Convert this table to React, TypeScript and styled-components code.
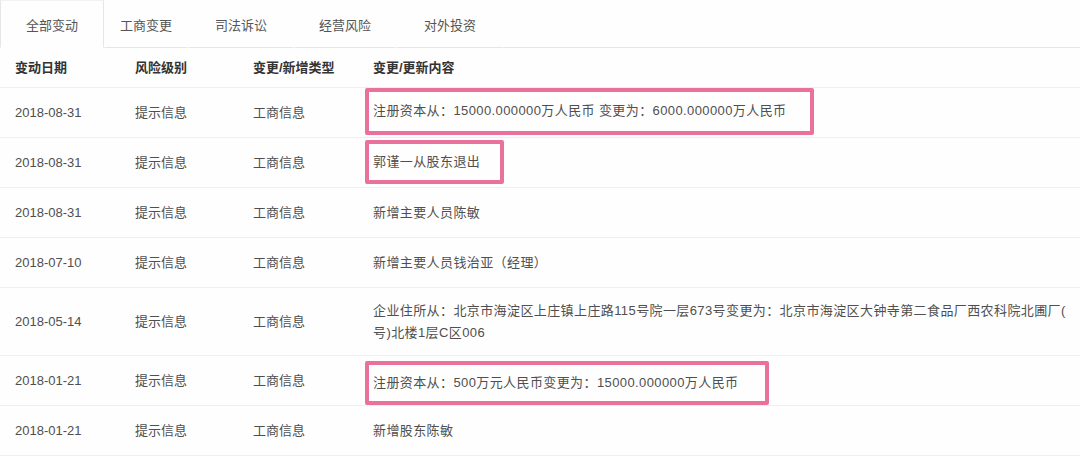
import styled, { createGlobalStyle } from "styled-components";

const GlobalStyle = createGlobalStyle`
  html, body {
    margin: 0;
    padding: 0;
    background: #fefefe;
    overflow: hidden;
  }
  body {
    font-family: "Liberation Sans", "Noto Sans CJK SC", sans-serif;
    font-size: 13px;
    color: #555;
  }
`;

const Page = styled.div`
  width: 1080px;
  height: 456px;
  display: flex;
  flex-direction: column;
`;

const TabBar = styled.div`
  display: flex;
  height: 48px;
  flex-shrink: 0;
`;

const Tab = styled.div<{ $w: number; $active?: boolean }>`
  width: ${p => p.$w}px;
  display: flex;
  align-items: center;
  justify-content: center;
  color: #555;
  box-sizing: border-box;
  border-bottom: 1px solid ${p => (p.$active ? "transparent" : "#e6e6e6")};
  border-left: 1px solid ${p => (p.$active ? "#e6e6e6" : "transparent")};
  border-right: 1px solid ${p => (p.$active ? "#e6e6e6" : "transparent")};
  border-top: 1px solid ${p => (p.$active ? "#f2f2f2" : "transparent")};
`;

const TabFill = styled.div`
  flex: 1;
  border-bottom: 1px solid #e6e6e6;
`;

const Row = styled.div<{ $h: number }>`
  display: grid;
  grid-template-columns: 120px 118px 120px 1fr;
  height: ${p => p.$h}px;
  box-sizing: border-box;
  border-bottom: 1px solid #efefef;
  flex-shrink: 0;
`;

const Cell = styled.div<{ $head?: boolean; $content?: boolean }>`
  display: flex;
  align-items: center;
  padding-left: 15px;
  line-height: 22px;
  color: ${p => (p.$head ? "#333" : "#4f4f4f")};
  font-weight: ${p => (p.$head ? 700 : 400)};
  letter-spacing: ${p => (p.$content ? "0.4px" : "0")};
  white-space: nowrap;
  overflow: hidden;
`;

const Mark = styled.div<{ $h: number; $pr: number; $dy?: number }>`
  display: flex;
  align-items: center;
  height: ${p => p.$h}px;
  box-sizing: border-box;
  border: 4px solid #e9719b;
  border-radius: 2px;
  margin-left: -8px;
  padding: 0 ${p => p.$pr}px 0 4px;
  margin-top: ${p => p.$dy ?? 0}px;
`;

const tabs = [
  { label: "全部变动", w: 104 },
  { label: "工商变更", w: 84 },
  { label: "司法诉讼", w: 106 },
  { label: "经营风险", w: 102 },
  { label: "对外投资", w: 108 },
];

type Item = {
  date: string;
  content: React.ReactNode;
  h?: number;
  mark?: { h: number; pr: number; dy?: number };
};

const rows: Item[] = [
  {
    date: "2018-08-31",
    content: "注册资本从：15000.000000万人民币 变更为：6000.000000万人民币",
    mark: { h: 47, pr: 24, dy: -3 },
  },
  { date: "2018-08-31", content: "郭谨一从股东退出", mark: { h: 44, pr: 20, dy: -2 } },
  { date: "2018-08-31", content: "新增主要人员陈敏" },
  { date: "2018-07-10", content: "新增主要人员钱治亚（经理）" },
  {
    date: "2018-05-14",
    h: 68,
    content: (
      <span>
        企业住所从：北京市海淀区上庄镇上庄路115号院一层673号变更为：北京市海淀区大钟寺第二食品厂西农科院北圃厂(
        <br />
        号)北楼1层C区006
      </span>
    ),
  },
  {
    date: "2018-01-21",
    content: "注册资本从：500万元人民币变更为：15000.000000万人民币",
    mark: { h: 44, pr: 27, dy: 4 },
  },
  { date: "2018-01-21", content: "新增股东陈敏" },
];

export default function App() {
  return (
    <Page>
      <GlobalStyle />
      <TabBar>
        {tabs.map((t, i) => (
          <Tab key={t.label} $w={t.w} $active={i === 0}>
            {t.label}
          </Tab>
        ))}
        <TabFill />
      </TabBar>
      <Row $h={40}>
        <Cell $head>变动日期</Cell>
        <Cell $head>风险级别</Cell>
        <Cell $head>变更/新增类型</Cell>
        <Cell $head>变更/更新内容</Cell>
      </Row>
      {rows.map((r, i) => (
        <Row key={i} $h={r.h ?? 50}>
          <Cell>{r.date}</Cell>
          <Cell>提示信息</Cell>
          <Cell>工商信息</Cell>
          <Cell $content>
            {r.mark ? (
              <Mark $h={r.mark.h} $pr={r.mark.pr} $dy={r.mark.dy}>
                {r.content}
              </Mark>
            ) : (
              r.content
            )}
          </Cell>
        </Row>
      ))}
    </Page>
  );
}
